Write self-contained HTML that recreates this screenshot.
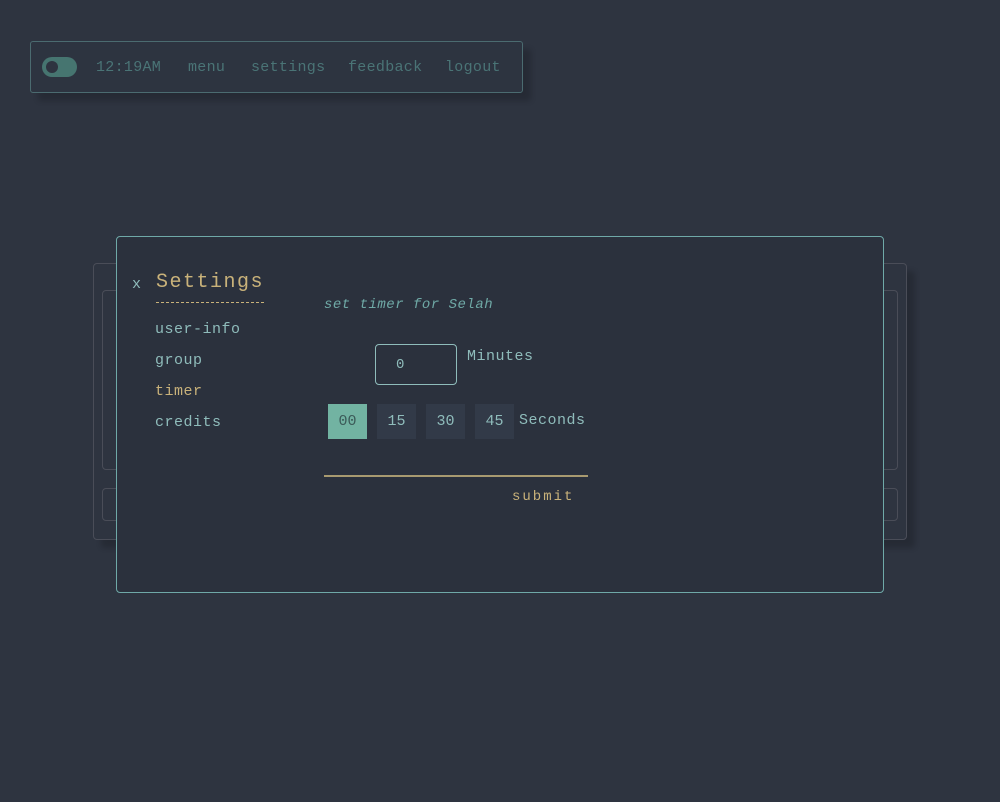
<!DOCTYPE html>
<html><head><style>
body{margin:0;width:1000px;height:802px;background:#2e3440;font-family:"Liberation Mono",monospace;position:relative;overflow:hidden}
.a{position:absolute;box-sizing:border-box}
.nav{left:30px;top:41px;width:493px;height:52px;border:1px solid #4b6b70;border-radius:3px;box-shadow:8px 8px 6px rgba(0,0,0,.18);background:#2d3440}
.nav span{position:absolute;top:17px;font-size:15px;color:#4a7476;letter-spacing:.3px}
.tog{left:11px;top:15px;width:35px;height:20px;border-radius:10px;background:#467570}
.tog:after{content:"";position:absolute;left:4px;top:4px;width:12px;height:12px;border-radius:6px;background:#2e3440}
.back{left:93px;top:263px;width:814px;height:277px;border:1px solid #4a4d58;border-radius:4px;box-shadow:8px 8px 6px rgba(0,0,0,.18)}
.in1{left:102px;top:290px;width:796px;height:180px;border:1px solid #4a4d58;border-radius:4px}
.in2{left:102px;top:488px;width:796px;height:33px;border:1px solid #4a4d58;border-radius:4px}
.modal{left:116px;top:236px;width:768px;height:357px;border:1px solid #6fa9a8;border-radius:4px;background:#2b313d}
.t{position:absolute;color:#8fbcbb;font-size:15px;white-space:nowrap;letter-spacing:.5px}
.y{color:#c9b27a}
.sec{position:absolute;top:404px;width:39px;height:35px;background:#323a48;color:#8fbcbb;font-size:15px;text-align:center;line-height:36px}
</style></head><body>
<div class="a nav"><div class="a tog"></div>
<span style="left:65px">12:19AM</span><span style="left:157px">menu</span><span style="left:220px">settings</span><span style="left:317px">feedback</span><span style="left:414px">logout</span></div>
<div class="a back"></div><div class="a in1"></div><div class="a in2"></div>
<div class="a modal"></div>
<div class="t" style="left:132px;top:276px">x</div>
<div class="t y" style="left:156px;top:271px;font-size:20px;letter-spacing:1.5px">Settings</div>
<div class="a" style="left:156px;top:302px;width:108px;border-top:1px dashed #c9b27a"></div>
<div class="t" style="left:155px;top:321px">user-info</div>
<div class="t" style="left:155px;top:352px">group</div>
<div class="t y" style="left:155px;top:383px">timer</div>
<div class="t" style="left:155px;top:414px">credits</div>
<div class="t" style="left:324px;top:297px;font-size:14px;font-style:italic;color:#6fa9a6">set timer for Selah</div>
<div class="a" style="left:375px;top:344px;width:82px;height:41px;border:1px solid #8fbcbb;border-radius:4px"></div>
<div class="t" style="left:396px;top:357px;font-size:14px">0</div>
<div class="t" style="left:467px;top:348px">Minutes</div>
<div class="sec" style="left:328px;background:#72b3a2;color:#3b5a58">00</div>
<div class="sec" style="left:377px">15</div>
<div class="sec" style="left:426px">30</div>
<div class="sec" style="left:475px">45</div>
<div class="t" style="left:519px;top:412px">Seconds</div>
<div class="a" style="left:324px;top:475px;width:264px;height:2px;background:#a89a70"></div>
<div class="t y" style="left:512px;top:489px;font-size:14px;letter-spacing:2px">submit</div>
</body></html>
